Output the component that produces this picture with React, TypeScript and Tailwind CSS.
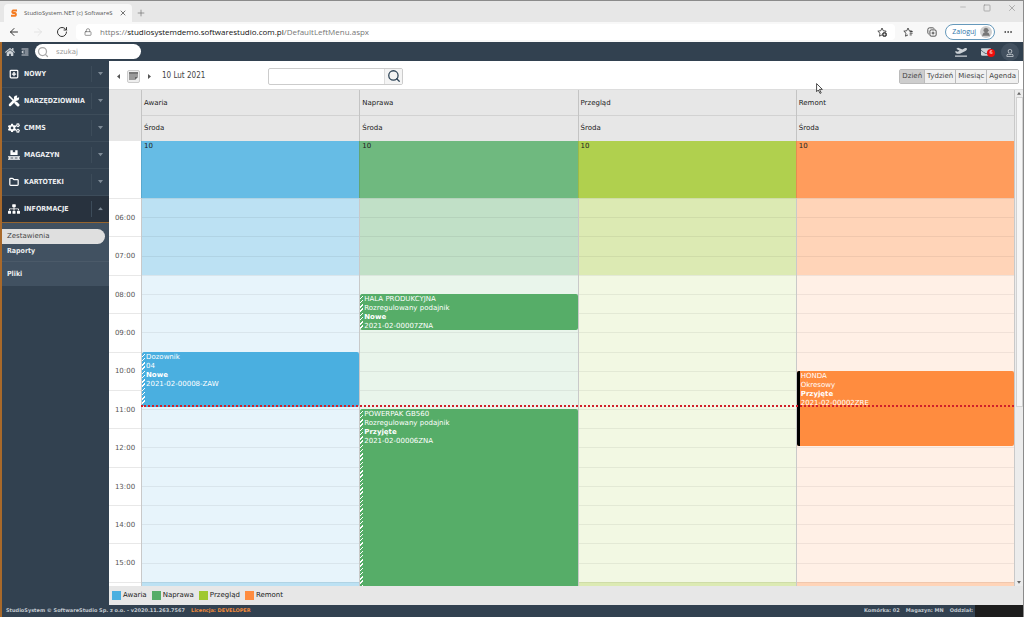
import type { ReactNode } from "react";
import { FaCogs, FaEnvelope, FaHome, FaOutdent, FaPallet, FaPlaneDeparture, FaRegUser, FaSitemap } from "react-icons/fa";
import {
  ArrowLeft,
  ArrowRight,
  Folder,
  Lock,
  Minus,
  MoreHorizontal,
  Plus,
  RotateCw,
  Search,
  Square,
  SquarePlus,
  UserRound,
  X,
} from "lucide-react";
import { clsx } from "clsx";

const START_HOUR = 5.5;
const SLOTS = 21;
const NOW = 10.89;

type CalendarEvent = {
  from: number;
  to: number;
  lines: [string, string, string, string];
  solid?: boolean;
};

type Resource = {
  name: string;
  allDay: string;
  off: string;
  work: string;
  color: string;
  events: CalendarEvent[];
};

const resources: Resource[] = [
  {
    name: "Awaria",
    allDay: "bg-[#66bce5]",
    off: "bg-[#bce1f3]",
    work: "bg-[#e7f4fb]",
    color: "bg-[#4aafe0]",
    events: [{ from: 9.5, to: 10.95, lines: ["Dozownik", "04", "Nowe", "2021-02-00008-ZAW"] }],
  },
  {
    name: "Naprawa",
    allDay: "bg-[#6fb97f]",
    off: "bg-[#c1e0c7]",
    work: "bg-[#e9f5eb]",
    color: "bg-[#56ad68]",
    events: [
      { from: 8, to: 8.95, lines: ["HALA PRODUKCYJNA", "Rozregulowany podajnik", "Nowe", "2021-02-00007ZNA"] },
      { from: 11, to: 16, lines: ["POWERPAK GB560", "Rozregulowany podajnik", "Przyjęte", "2021-02-00006ZNA"] },
    ],
  },
  {
    name: "Przegląd",
    allDay: "bg-[#b0d04e]",
    off: "bg-[#dceab3]",
    work: "bg-[#f2f8e3]",
    color: "bg-[#a0c82f]",
    events: [],
  },
  {
    name: "Remont",
    allDay: "bg-[#ff9c5c]",
    off: "bg-[#ffd4b8]",
    work: "bg-[#fff0e6]",
    color: "bg-[#ff8c3f]",
    events: [{ from: 10, to: 11.95, solid: true, lines: ["HONDA", "Okresowy", "Przyjęte", "2021-02-00002ZRE"] }],
  },
];

const hours = ["06:00", "07:00", "08:00", "09:00", "10:00", "11:00", "12:00", "13:00", "14:00", "15:00"];

const views = ["Dzień", "Tydzień", "Miesiąc", "Agenda"];

function offset(hour: number) {
  return `${((hour - START_HOUR) * 200) / SLOTS}%`;
}

function ToolsIcon() {
  return (
    <svg viewBox="0 0 24 24" className="size-3" fill="none" stroke="currentColor" strokeLinecap="round">
      <path d="M3 3l5 5 8 8" strokeWidth="3.5" />
      <path d="M16 16l4 4" strokeWidth="6" />
      <path d="M4 20L16 8" strokeWidth="5" />
      <path d="M21 6a4 4 0 1 1-4-4l-1 4 2 1z" strokeWidth="2.5" fill="currentColor" />
    </svg>
  );
}

function StarIcon({ children }: { children: ReactNode }) {
  return (
    <svg viewBox="0 0 24 24" className="size-2.5" fill="none" stroke="currentColor" strokeWidth="2" strokeLinejoin="round">
      <path d="M12 19l-6 3 1.200-7L2 10l7-1 3-6.500L15 9l7 1-3 3" />
      {children}
    </svg>
  );
}

const menu: { label: string; icon: ReactNode; open?: boolean }[] = [
  { label: "NOWY", icon: <SquarePlus className="size-2.5" strokeWidth={3} /> },
  { label: "NARZĘDZIOWNIA", icon: <ToolsIcon /> },
  { label: "CMMS", icon: <FaCogs className="size-3" /> },
  { label: "MAGAZYN", icon: <FaPallet className="size-3" /> },
  { label: "KARTOTEKI", icon: <Folder className="size-2.5" strokeWidth={3} /> },
  { label: "INFORMACJE", icon: <FaSitemap className="size-3" />, open: true },
];

function BrowserChrome() {
  return (
    <header className="font-['Open_Sans',sans-serif] text-[#333]">
      <div className="flex h-[22px] items-end border-t border-[#8b8b8b] bg-[#e7e7e7]">
        <div className="ml-1 flex h-[18px] w-32 items-center gap-1.5 rounded-t-sm bg-[#f8f8f8] px-1.5">
          <svg viewBox="0 0 16 16" className="size-2 shrink-0" fill="none" stroke="#f47b20" strokeWidth="4">
            <path d="M14 3H6a3 3 0 0 0 0 5h4a3 3 0 0 1 0 5.500H2" />
          </svg>
          <span className="flex-1 text-[6px] whitespace-nowrap text-[#555]">StudioSystem.NET (c) SoftwareS</span>
          <button aria-label="Zamknij kartę">
            <X className="size-2" />
          </button>
        </div>
        <button aria-label="Nowa karta" className="ml-1 flex h-[18px] items-center">
          <Plus className="size-2.5 text-[#666]" strokeWidth={1.5} />
        </button>
        <div className="ml-auto flex h-full items-start gap-4 pt-0.5 pr-1.5 text-[#888]">
          <button aria-label="Minimalizuj">
            <Minus className="size-2" strokeWidth={1.5} />
          </button>
          <button aria-label="Maksymalizuj" className="pt-px">
            <Square className="size-2" strokeWidth={1.8} />
          </button>
          <button aria-label="Zamknij">
            <X className="size-2.5" strokeWidth={1.5} />
          </button>
        </div>
      </div>
      <div className="flex h-5 items-center bg-[#f8f8f8] pr-2.5 pl-2">
        <button aria-label="Wstecz">
          <ArrowLeft className="size-3" />
        </button>
        <button aria-label="Dalej" className="ml-3 text-[#ddd]">
          <ArrowRight className="size-3" strokeWidth={1.5} />
        </button>
        <button aria-label="Odśwież" className="ml-3">
          <RotateCw className="size-3" />
        </button>
        <div className="ml-2 flex h-4 flex-1 items-center gap-2 rounded-sm bg-white px-2">
          <Lock className="size-2 text-[#666]" />
          <span className="text-[8px] text-[#777]">
            https://<span className="text-[#111]">studiosystemdemo.softwarestudio.com.pl</span>/DefaultLeftMenu.aspx
          </span>
          <button aria-label="Dodaj do ulubionych" className="ml-auto">
            <StarIcon>
              <circle cx="18" cy="18" r="5" fill="#555" />
              <path d="M15.500 18h5M18 15.500v5" stroke="#fff" strokeWidth="1.500" />
            </StarIcon>
          </button>
        </div>
        <div className="flex items-center gap-3.5 pl-2">
          <button aria-label="Ulubione">
            <StarIcon>
              <path d="M16 11h7M16 15h7M16 19h5" />
            </StarIcon>
          </button>
          <button aria-label="Kolekcje">
            <svg viewBox="0 0 24 24" className="size-2.5" fill="none" stroke="currentColor" strokeWidth="2">
              <rect x="7" y="7" width="15" height="15" rx="3" />
              <path d="M14.500 11v7M11 14.500h7M4 17a3 3 0 0 1-2-3V6a4 4 0 0 1 4-4h8a3 3 0 0 1 3 2" />
            </svg>
          </button>
        </div>
        <button className="ml-2 flex h-4 items-center gap-1 rounded-full border border-[#6699bb] bg-white pr-0.5 pl-1.5 text-[7px] text-[#2f75a8]">
          Zaloguj
          <span className="flex size-3 items-center justify-center rounded-full bg-[#d0d0d0] text-[#777]">
            <UserRound className="size-2.5" fill="currentColor" />
          </span>
        </button>
        <button aria-label="Więcej" className="ml-2">
          <MoreHorizontal className="size-2.5" />
        </button>
      </div>
    </header>
  );
}

function AppBar() {
  return (
    <div className="flex h-[19px] items-center bg-[#324150] text-[#cdd2d7]">
      <a href="#start" aria-label="Start" className="ml-[3px]">
        <FaHome className="size-2.5" />
      </a>
      <button aria-label="Zwiń menu" className="ml-1.5">
        <FaOutdent className="size-2" />
      </button>
      <label className="ml-1.5 flex h-[15px] w-[106px] items-center gap-1.5 rounded-full bg-white pl-0.5 text-[#aaa]">
        <Search className="size-3 shrink-0" strokeWidth={2.5} />
        <input
          aria-label="Szukaj"
          placeholder="szukaj"
          className="w-full min-w-0 pt-0.5 pl-px text-[7px] text-[#333] outline-none placeholder:text-[#999]"
        />
      </label>
      <div className="ml-auto flex h-full items-center">
        <FaPlaneDeparture className="size-3" />
        <button aria-label="Wiadomości" className="relative ml-3.5">
          <FaEnvelope className="size-2.5" />
          <span className="absolute top-0.5 left-1.5 flex size-2 items-center justify-center rounded-full bg-[#f00c0c] text-[5px] text-white">
            6
          </span>
        </button>
        <button aria-label="Konto" className="mr-1 ml-2.5 flex size-[18px] items-center justify-center rounded-full bg-[#42505f]">
          <FaRegUser className="mt-0.5 size-2" />
        </button>
      </div>
    </div>
  );
}

function Sidebar() {
  return (
    <nav className="w-[107px] shrink-0 bg-[#324150] text-[7px] text-white">
      {menu.map((item) => (
        <button
          key={item.label}
          className={clsx(
            "flex h-[27px] w-full items-center border-b text-left",
            item.open ? "border-[#96652f] bg-[#28323e]" : "border-[#3d4c5a]",
          )}
        >
          <span className="flex w-[22px] justify-center pl-0.5">{item.icon}</span>
          <span className="flex-1 font-['DejaVu_Sans_Condensed','DejaVu_Sans',sans-serif] font-bold text-[#eceef0]">
            {item.label}
          </span>
          <span className="flex h-4 w-[18px] items-center justify-center border-l border-[#3d4c5a] text-[#7f8b97]">
            <svg viewBox="0 0 6 4" className={clsx("w-[5px]", item.open && "rotate-180")} fill="currentColor">
              <path d="M0 0h6L3 4z" />
            </svg>
          </span>
        </button>
      ))}
      <div className="bg-[#415161] pt-1.5">
        <a href="#zestawienia" className="mr-1 flex h-[15px] items-center rounded-r-full bg-[#dfdfdf] pl-[5px] text-[#444]">
          Zestawienia
        </a>
        <div className="font-['DejaVu_Sans_Condensed','DejaVu_Sans',sans-serif] font-bold text-[#eceef0]">
          <a href="#raporty" className="flex h-[18px] items-center border-b border-[#4b5a69] pb-0.5 pl-[5px]">
            Raporty
          </a>
          <a href="#pliki" className="flex h-6 items-center pl-[5px]">
            Pliki
          </a>
        </div>
      </div>
    </nav>
  );
}

function Toolbar() {
  return (
    <div className="flex h-7 items-center bg-white px-2 pt-0.5 text-[7px] text-[#444]">
      <div className="flex w-[151px] items-center">
        <button aria-label="Poprzedni dzień">
          <svg viewBox="0 0 3 5" className="h-[5px]" fill="#555">
            <path d="M3 0v5L0 2.500z" />
          </svg>
        </button>
        <button aria-label="Kalendarz" className="ml-[7px] flex size-[13px] items-center justify-center rounded-xs border border-[#ccc] bg-[#eee]">
          <svg viewBox="0 0 9 8" className="w-[9px]" fill="#999">
            <path d="M0 0h9v5H6v3H0z" />
            <path d="M0 0h9v2H0z" fill="#777" />
            <path d="M6 8V5h3z" fill="#666" />
          </svg>
        </button>
        <button aria-label="Następny dzień" className="ml-2">
          <svg viewBox="0 0 3 5" className="h-[5px]" fill="#555">
            <path d="M0 0v5l3-2.500z" />
          </svg>
        </button>
        <span className="ml-[11px] font-['DejaVu_Sans_Condensed','DejaVu_Sans',sans-serif] text-[8px]">10 Lut 2021</span>
      </div>
      <div className="flex h-[17px] w-[135px] overflow-hidden rounded-xs border border-[#ccc]">
        <input aria-label="Szukaj zlecenia" className="min-w-0 flex-1 px-1 outline-none" />
        <button aria-label="Szukaj" className="flex w-[18px] items-center justify-center border-l border-[#ddd] bg-[#f4f4f4]">
          <Search className="size-3.5 text-[#2f4558]" strokeWidth={2.2} />
        </button>
      </div>
      <div className="-mr-1 ml-auto flex h-[15px] rounded-xs border border-[#bbb]">
        {views.map((view, i) => (
          <button
            key={view}
            className={clsx("px-0.5", i === 0 ? "bg-[#cdcdcd]" : "border-l border-[#bbb] bg-[#f0f0f0]")}
          >
            {view}
          </button>
        ))}
      </div>
    </div>
  );
}

function EventCard({ event, color }: { event: CalendarEvent; color: string }) {
  return (
    <div
      className={clsx("absolute right-0 left-0 flex overflow-hidden rounded-xs text-[7px] leading-[9px] text-white", color)}
      style={{ top: offset(event.from), height: offset(START_HOUR + event.to - event.from) }}
    >
      <span
        className={clsx(
          "w-[3px] shrink-0",
          event.solid ? "bg-black" : "bg-[repeating-linear-gradient(135deg,#fff_0_1px,transparent_1px_3px)]",
        )}
      />
      <div className="pt-px pl-px">
        {event.lines.map((line, i) => (
          <p key={line} className={clsx("whitespace-nowrap", i === 2 && "font-bold")}>
            {line}
          </p>
        ))}
      </div>
    </div>
  );
}

function Scheduler() {
  return (
    <div className="flex min-h-0 flex-1 border-t border-[#ddd]">
      <div className="flex min-w-0 flex-1 flex-col">
        <div className="flex bg-[#e7e7e7] text-[7px] text-[#222]">
          <div className="w-8 shrink-0" />
          <div className="grid flex-1 grid-cols-4">
            {resources.map((r) => (
              <div key={r.name} className="border-l border-[#c4c4c4]">
                <div className="flex h-[26px] items-center border-b border-[#d2d2d2] pt-0.5 pl-0.5">{r.name}</div>
                <div className="flex h-[25px] items-center pl-0.5">Środa</div>
              </div>
            ))}
          </div>
        </div>
        <div className="flex text-[7px] text-[#222]">
          <div className="w-8 shrink-0" />
          <div className="grid flex-1 grid-cols-4">
            {resources.map((r) => (
              <div key={r.name} className={clsx("h-[57px] border-l border-black/10 pl-0.5", r.allDay)}>
                10
              </div>
            ))}
          </div>
        </div>
        <div className="min-h-0 flex-1 overflow-hidden">
          <div className="flex h-[403px]">
            <div className="grid w-8 shrink-0 grid-rows-[repeat(21,minmax(0,1fr))] text-[7px] text-[#555]">
              {hours.map((hour) => (
                <div key={hour} className="row-span-2 flex items-center justify-center border-t border-[#e8e8e8] pt-px">
                  {hour}
                </div>
              ))}
              <div className="border-t border-[#e8e8e8]" />
            </div>
            <div className="relative grid flex-1 grid-cols-4">
              {resources.map((r) => (
                <div key={r.name} className="relative grid grid-rows-[repeat(21,minmax(0,1fr))] border-l border-[#c9c9c9]">
                  {Array.from({ length: SLOTS }, (_, i) => (
                    <div key={i} className={clsx("border-t border-black/6", i < 4 || i === 20 ? r.off : r.work)} />
                  ))}
                  {r.events.map((event) => (
                    <EventCard key={event.from} event={event} color={r.color} />
                  ))}
                </div>
              ))}
              <div className="absolute right-0 left-0 border-t-2 border-dotted border-[#d0202a]" style={{ top: offset(NOW) }} />
            </div>
          </div>
        </div>
      </div>
      <div className="flex w-[9px] flex-col items-center border-l border-[#c9c9c9] bg-[#ececec] py-0.5">
        <svg viewBox="0 0 6 4" className="w-1" fill="#666">
          <path d="M0 4h6L3 0z" />
        </svg>
        <div className="mt-0.5 h-[310px] w-[7px] border border-[#d2d2d2] bg-[#f6f6f6]" />
        <svg viewBox="0 0 6 4" className="mt-auto w-1" fill="#666">
          <path d="M0 0h6L3 4z" />
        </svg>
      </div>
    </div>
  );
}

function Legend() {
  return (
    <ul className="flex h-[19px] items-center gap-[5px] bg-[#e7e7e7] pl-[3px] text-[7px] text-[#222]">
      {resources.map((r) => (
        <li key={r.name} className="flex items-center gap-0.5">
          <span className={clsx("size-[9px]", r.color)} />
          {r.name}
        </li>
      ))}
    </ul>
  );
}

function StatusBar() {
  return (
    <footer className="flex h-3 items-center bg-[#324150] pl-1 text-[5px] font-bold text-[#c3cad1]">
      <span>StudioSystem © SoftwareStudio Sp. z o.o. - v2020.11.263.7567</span>
      <span className="ml-1.5 text-[#f08a3a]">Licencja: DEVELOPER</span>
      <span className="ml-auto">Komórka: 02</span>
      <span className="ml-1.5">Magazyn: MN</span>
      <span className="ml-1.5">Oddział:</span>
      <span className="ml-0.5 h-full w-12 bg-[#1d1d1d]" />
    </footer>
  );
}

export default function App() {
  return (
    <div className="relative flex h-screen flex-col overflow-hidden border-r border-[#8b8b8b] font-['DejaVu_Sans',sans-serif]">
      <BrowserChrome />
      <div className="flex min-h-0 flex-1 flex-col border-l-2 border-[#a9692a]">
        <AppBar />
        <div className="flex min-h-0 flex-1">
          <Sidebar />
          <main className="flex min-w-0 flex-1 flex-col">
            <Toolbar />
            <Scheduler />
            <Legend />
          </main>
        </div>
        <StatusBar />
      </div>
      <svg viewBox="0 0 12 19" className="absolute top-[83px] left-[816px] h-[11px]" fill="#fff" stroke="#333" strokeWidth="1.5">
        <path d="M1 1v14l3-3 3 6 2-1-3-6h5z" />
      </svg>
    </div>
  );
}
